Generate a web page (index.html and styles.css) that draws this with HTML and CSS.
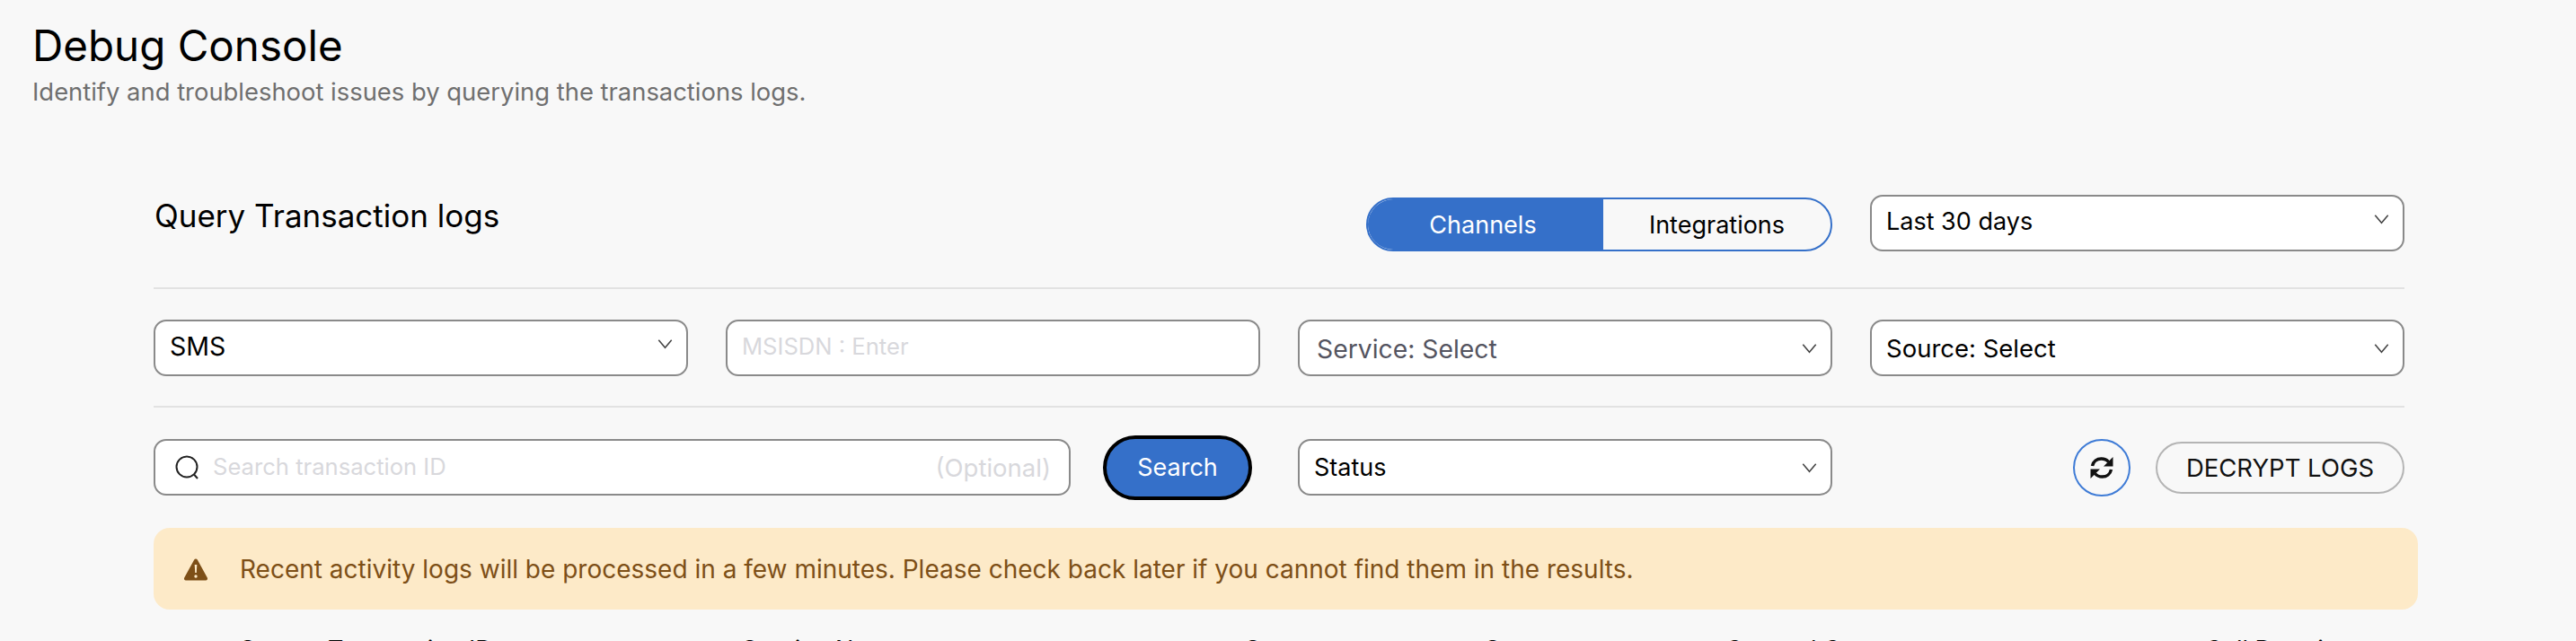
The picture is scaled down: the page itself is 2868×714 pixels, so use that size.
FILE: index.html
```html
<!DOCTYPE html>
<html lang="en">
<head>
<meta charset="utf-8">
<title>Debug Console</title>
<link rel="stylesheet" href="styles.css">
</head>
<body>
<header class="page-head">
  <h1 class="title">Debug Console</h1>
  <p class="subtitle">Identify and troubleshoot issues by querying the transactions logs.</p>
</header>
<main class="panel">
  <div class="row row-top">
    <h2 class="panel-title">Query Transaction logs</h2>
    <div class="toggle">
      <span class="toggle-on">Channels</span>
      <span class="toggle-off">Integrations</span>
    </div>
    <div class="field select"><span class="lift">Last 30 days</span><svg class="chev chev-up" viewBox="0 0 14 10"><path d="M1 1.5 7 8.5 13 1.5"/></svg></div>
  </div>
  <div class="row row-mid">
    <div class="field select"><span class="lift sms">SMS</span><svg class="chev chev-up" viewBox="0 0 14 10"><path d="M1 1.5 7 8.5 13 1.5"/></svg></div>
    <div class="field"><span class="ph ph-small lift">MSISDN : Enter</span></div>
    <div class="field select service"><span class="muted">Service: Select</span><svg class="chev" viewBox="0 0 14 10"><path d="M1 1.5 7 8.5 13 1.5"/></svg></div>
    <div class="field select"><span class="source">Source: Select</span><svg class="chev" viewBox="0 0 14 10"><path d="M1 1.5 7 8.5 13 1.5"/></svg></div>
  </div>
  <div class="row row-low">
    <div class="search-group">
      <div class="field search">
        <svg class="glass" viewBox="0 0 28 28"><circle cx="13" cy="13" r="11.5"/><path d="M21 21.500 25 26"/></svg>
        <span class="ph ph-small grow lift-small">Search transaction ID</span>
        <span class="ph opt">(Optional)</span>
      </div>
      <button class="btn-search">Search</button>
    </div>
    <div class="field select"><span>Status</span><svg class="chev" viewBox="0 0 14 10"><path d="M1 1.5 7 8.5 13 1.5"/></svg></div>
    <div class="actions">
      <button class="btn-round"><svg viewBox="0 0 28 28"><path class="rf" d="M3.500 12C4.500 7 8.500 4 13.500 4c3 0 6 1 8 3.500"/><path class="rf" d="M24.500 16c-1 5-5 8-10 8-3 0-6-1-8-3.500"/><path class="rt" d="M26.500 2v10.500H16z"/><path class="rt" d="M1.500 26V15.500H12z"/></svg></button>
      <button class="btn-decrypt">DECRYPT LOGS</button>
    </div>
  </div>
  <div class="alert">
    <svg class="warn" viewBox="0 0 28 26"><path class="warn-bg" d="M14 1.500c.8 0 1.400.4 1.800 1.100l11 20c.7 1.300-.1 2.900-1.700 2.900H2.900c-1.600 0-2.400-1.600-1.700-2.900l11-20c.4-.7 1-1.100 1.800-1.100z"/><path class="warn-mark" d="M12.700 8h2.600l-.5 9h-1.600z"/><circle class="warn-mark" cx="14" cy="21" r="1.700"/></svg>
    <span>Recent activity logs will be processed in a few minutes. Please check back later if you cannot find them in the results.</span>
  </div>
  <div class="thead">
    <span class="th th1">Source Transaction ID</span>
    <span class="th th2">Service Name</span>
    <span class="th th3">Segment</span>
    <span class="th th4">Status</span>
    <span class="th th5">Created Cost</span>
    <span class="th th6">Call Duration</span>
  </div>
</main>
</body>
</html>
```
FILE: styles.css
```css
* { box-sizing: border-box; }
html, body { margin: 0; height: 714px; overflow: hidden; }
body { background: #f8f8f8; font-family: Inter, "Liberation Sans", sans-serif; color: #000; }
.page-head { padding: 26px 36px 0; height: 117px; }
.title { margin: 0; font-size: 47.5px; line-height: 50px; font-weight: 400; }
.subtitle { margin: 10px 0 0; font-size: 27.4px; line-height: 32px; color: #6f6f6f; }
.panel { width: 2522px; margin: 100px 0 0 171px; }
.row { width: 2506px; display: grid; grid-template-columns: repeat(4, 595px); column-gap: 42px; align-items: start; }
.row-top { height: 63px; }
.panel-title { grid-column: 1 / span 2; margin: 3px 0 0 1px; font-size: 35px; line-height: 40px; font-weight: 400; }
.toggle { display: flex; width: 519px; height: 60px; margin: 3px 0 0 76px; border-radius: 30px; border: 2px solid #3570c9; overflow: hidden; font-size: 27px; }
.toggle span { display: flex; align-items: center; justify-content: center; }
.toggle-on { width: 262px; padding-right: 6px; background: #3570c9; color: #fff; }
.toggle-off { flex: 1; }
.field { height: 63px; background: #fff; border: 2px solid #8a8a8a; border-radius: 14px; display: flex; align-items: center; padding: 0 16px; font-size: 27px; }
.select { justify-content: space-between; }
.service { padding-left: 19px; }
.chev { width: 17px; height: 12px; margin-right: -1px; fill: none; stroke: #444; stroke-width: 1.3; }
.chev-up { margin-bottom: 9px; }
.lift { margin-bottom: 4px; }
.lift-small { margin-bottom: 2px; }
.sms { font-size: 28.5px; }
.source { font-size: 27.5px; }
.muted { color: #54545f; font-size: 28.3px; padding-top: 2px; }
.ph { color: #d8d8dc; }
.ph-small { font-size: 25.6px; }
.opt { font-size: 27.5px; }
.grow { flex: 1; }
.row-mid { margin-top: 40px; padding-top: 34px; border-top: 2px solid #e2e2e2; height: 99px; }
.row-low { margin-top: 33px; padding-top: 35px; border-top: 2px solid #e2e2e2; height: 100px; }
.search-group { grid-column: 1 / span 2; display: flex; align-items: center; gap: 36px; height: 63px; }
.search { width: 1021px; padding: 0 20px 0 22px; }
.glass { width: 28px; height: 28px; margin-right: 14px; fill: none; stroke: #222; stroke-width: 2; }
.btn-search { flex: none; width: 166px; height: 72px; background: #3570c9; border: 4px solid #000; border-radius: 36px; color: #fff; font: 27px Inter, "Liberation Sans", sans-serif; }
.actions { display: flex; justify-content: flex-end; align-items: center; gap: 28px; height: 63px; }
.btn-round { width: 64px; height: 64px; padding: 0; background: none; border: 2px solid #3e7bd6; border-radius: 50%; display: flex; align-items: center; justify-content: center; }
.btn-round svg { width: 28px; height: 28px; }
.rf { fill: none; stroke: #111; stroke-width: 3.5; }
.rt { fill: #111; }
.btn-decrypt { width: 277px; height: 58px; background: none; border: 2px solid #b4b4b4; border-radius: 29px; font: 27.5px Inter, "Liberation Sans", sans-serif; color: #111; }
.alert { width: 2521px; height: 91px; margin-top: 36px; background: #fdeac8; border-radius: 18px; display: flex; align-items: center; padding: 0 0 0 33px; gap: 35px; font-size: 28px; color: #7d4f17; }
.warn { width: 28px; height: 26px; flex: none; }
.warn-bg { fill: #7d4f17; }
.warn-mark { fill: #fdeac8; }
.thead { position: relative; height: 40px; margin-top: 28px; font-size: 27px; }
.th { position: absolute; top: 0; white-space: nowrap; }
.th1 { left: 96px; }
.th2 { left: 655px; }
.th3 { left: 1215px; }
.th4 { left: 1482px; }
.th5 { left: 1750px; }
.th6 { left: 2284px; }
```
